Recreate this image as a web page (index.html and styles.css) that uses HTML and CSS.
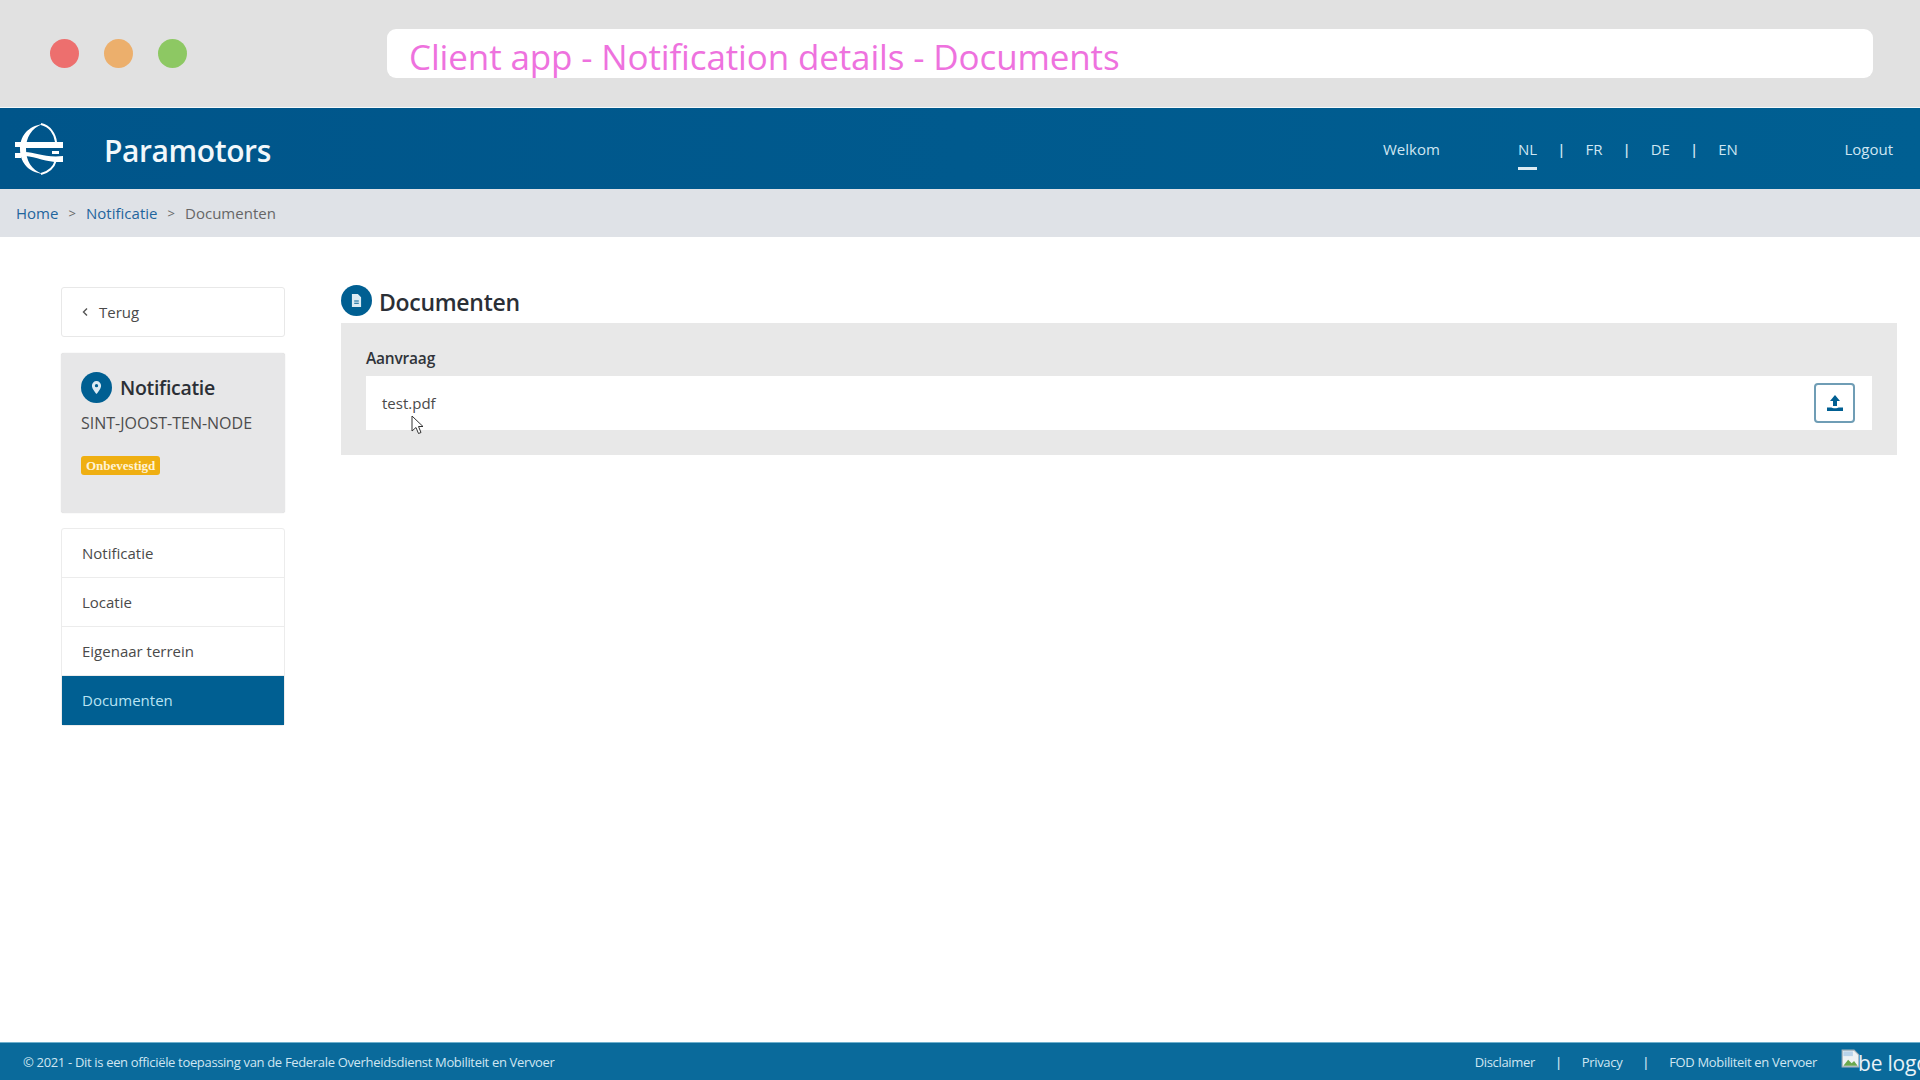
FILE: index.html
```html
<!DOCTYPE html>
<html lang="en">
<head>
  <meta charset="UTF-8" />
  <title>Client app - Notification details - Documents</title>
  <link rel="stylesheet" href="styles.css">
</head>
<body>
  <div class="window-bar">
    <div class="dots">
      <span class="dot red"></span>
      <span class="dot orange"></span>
      <span class="dot green"></span>
    </div>
    <div class="address">Client app - Notification details - Documents</div>
  </div>

  <header class="topbar">
    <svg class="logo" viewBox="0 0 50 52" fill="none">
      <path d="M29 1C13 3 6 14 6 26c0 12 7 23 23 25C17 47 12 37 12 26S17 5 29 1Z" fill="#fff"/>
      <path d="M27 1c9 2 14 10 15 18M42 37c-2 7-7 12-15 14" stroke="#fff" stroke-width="2"/>
      <rect x="11" y="19" width="38" height="6" fill="#fff"/>
      <path d="M11 29c10 0 20 6 38 4v6c-15 1-26-5-38-6Z" fill="#fff"/>
      <rect x="1" y="19" width="6" height="5" fill="#fff"/>
      <rect x="1" y="30" width="6" height="5" fill="#fff"/>
      <rect x="38" y="28" width="7" height="3" fill="#fff"/>
    </svg>
    <div class="brand">Paramotors</div>
    <nav class="topnav">
      <a class="welcome">Welkom</a>
      <a class="lang active">NL</a>
      <span class="sep">|</span>
      <a class="lang">FR</a>
      <span class="sep">|</span>
      <a class="lang">DE</a>
      <span class="sep">|</span>
      <a class="lang">EN</a>
      <a class="logout">Logout</a>
    </nav>
  </header>

  <div class="breadcrumb">
    <a>Home</a>
    <span class="gt">&gt;</span>
    <a>Notificatie</a>
    <span class="gt">&gt;</span>
    <span class="current">Documenten</span>
  </div>

  <div class="content">
    <aside class="sidebar">
      <a class="back-btn">
        <svg class="chevron" viewBox="0 0 8 10" fill="none"><path d="M6 1.5 2.5 5 6 8.500" stroke="#555" stroke-width="1.400"/></svg>
        Terug
      </a>
      <div class="summary">
        <div class="summary-title">
          <span class="round-icon">
            <svg viewBox="0 0 12 14" width="11" height="13"><path fill-rule="evenodd" d="M6 0a5 5 0 0 1 5 5c0 3.500-5 9-5 9S1 8.500 1 5a5 5 0 0 1 5-5Zm0 3.200a1.800 1.800 0 1 0 0 3.600 1.800 1.800 0 0 0 0-3.600Z" fill="#dcebf3"/></svg>
          </span>
          Notificatie
        </div>
        <div class="summary-place">SINT-JOOST-TEN-NODE</div>
        <span class="badge">Onbevestigd</span>
      </div>
      <ul class="side-menu">
        <li>Notificatie</li>
        <li>Locatie</li>
        <li>Eigenaar terrein</li>
        <li class="active">Documenten</li>
      </ul>
    </aside>

    <main class="main">
      <h1 class="page-title">
        <span class="round-icon">
          <svg viewBox="0 0 12 14" width="11" height="13"><path fill-rule="evenodd" d="M1 0h6.500L11 3.500V14H1Zm2.500 7v1h5V7Zm0 2.500v1h5v-1Z" fill="#dcebf3"/></svg>
        </span>
        <span class="page-title-text">Documenten</span>
      </h1>
      <section class="panel">
        <div class="panel-label">Aanvraag</div>
        <div class="file-row">
          <span>test.pdf</span>
          <button class="upload-btn">
            <svg viewBox="0 0 16 16" width="16" height="16"><path d="M8 0 13 6H10V11H6V6H3ZM0 12.500H4.500C5 13.500 11 13.500 11.500 12.500H16V16H0Z" fill="#005f92"/></svg>
          </button>
        </div>
      </section>
      <svg class="cursor" viewBox="0 0 13 20" width="13" height="20"><path d="M1 1v15l4-3.500 2.500 6 2.500-1-2.500-6H12Z" fill="#fff" stroke="#333" stroke-width="1"/></svg>
    </main>
  </div>

  <footer class="footer">
    <div class="copyright">© 2021 - Dit is een officiële toepassing van de Federale Overheidsdienst Mobiliteit en Vervoer</div>
    <div class="footer-links">
      <a>Disclaimer</a>
      <span class="sep">|</span>
      <a>Privacy</a>
      <span class="sep">|</span>
      <a>FOD Mobiliteit en Vervoer</a>
    </div>
    <div class="be-logo">
      <svg viewBox="0 0 16 16" width="19" height="19"><path d="M1 1h10l4 4v10H1Z" fill="#eef2f4" stroke="#aab4ba"/><path d="M2 14l4-5 3 3 2-2 3 4Z" fill="#6aa84f"/><path d="M2 2h8v4H2Z" fill="#b9d3ea"/></svg>
      <span>be logo</span>
    </div>
  </footer>
</body>
</html>
```

FILE: styles.css
```css
* {
  box-sizing: border-box;
}

html, body {
  height: 100%;
}

body {
  margin: 0;
  font-family: 'Open Sans', 'Noto Sans', sans-serif;
  font-size: 15px;
  color: #4a4a4a;
  background: #fff;
  display: flex;
  flex-direction: column;
  height: 1080px;
  overflow: hidden;
}

/* recording frame */
.window-bar {
  height: 108px;
  flex-shrink: 0;
  background: #e1e1e1;
  border-bottom: 1px solid #f4f8fa;
  display: flex;
  align-items: flex-start;
  padding: 29px 47px 0 50px;
}

.dots {
  display: flex;
  gap: 25px;
  margin: 10px 200px 0 0;
}

.dot {
  width: 29px;
  height: 29px;
  border-radius: 50%;
}

.red { background: #ed6f6e; }
.orange { background: #ecaf6c; }
.green { background: #8dc863; }

.address {
  flex: 1;
  height: 49px;
  background: #fff;
  border-radius: 9px;
  padding-left: 22px;
  font-size: 35px;
  line-height: 56px;
  color: #ee72de;
  letter-spacing: -0.14px;
}

/* app header */
.topbar {
  height: 81px;
  flex-shrink: 0;
  background: linear-gradient(to right, #00558a, #005f92);
  color: #cfe6f2;
  display: flex;
  align-items: center;
  padding-left: 14px;
}

.logo {
  width: 50px;
  height: 52px;
  flex-shrink: 0;
}

.brand {
  margin-left: 40px;
  padding-top: 4px;
  font-size: 30px;
  font-weight: 600;
  color: #f2f8fb;
  letter-spacing: -0.4px;
}

.topnav {
  margin-left: auto;
  display: flex;
  align-items: center;
  width: 537px;
  font-size: 15px;
}

.welcome {
  width: 135px;
}

.lang {
  position: relative;
}

.lang.active::after {
  content: "";
  position: absolute;
  left: 0;
  right: 0;
  bottom: -11px;
  height: 3px;
  background: #dcebf3;
}

.sep {
  margin: 0 20px;
  font-weight: 600;
}

.logout {
  margin-left: auto;
  margin-right: 27px;
}

.breadcrumb {
  height: 48px;
  flex-shrink: 0;
  background: #dfe2e7;
  display: flex;
  align-items: center;
  padding-left: 16px;
  font-size: 15px;
  letter-spacing: 0.02px;
  color: #666;
}

.breadcrumb a {
  color: #1f659d;
}

.gt {
  margin: 0 10px;
  font-size: 13px;
}

/* page body */
.content {
  flex: 1;
  display: flex;
  padding: 50px 23px 0 61px;
}

.sidebar {
  width: 224px;
  flex-shrink: 0;
}

.back-btn {
  height: 50px;
  background: #fff;
  border: 1px solid #e8e8e8;
  border-radius: 3px;
  display: flex;
  align-items: center;
  padding-left: 19px;
  gap: 10px;
}

.chevron {
  width: 8px;
  height: 10px;
}

.summary {
  margin-top: 16px;
  height: 160px;
  background: #e7e7e8;
  border-radius: 3px;
  padding: 19px 20px;
  box-shadow: 0 0 1px #ccc;
}

.summary-title {
  display: flex;
  align-items: center;
  gap: 8px;
  font-size: 19.500px;
  font-weight: 600;
  color: #2b2f36;
  letter-spacing: -0.3px;
}

.round-icon {
  width: 31px;
  height: 31px;
  border-radius: 50%;
  background: #005f92;
  display: flex;
  align-items: center;
  justify-content: center;
  flex-shrink: 0;
}

.summary-place {
  margin-top: 9px;
  font-size: 16px;
  color: #4d4d4d;
}

.badge {
  display: inline-block;
  margin-top: 22px;
  height: 19px;
  padding: 0 5px;
  background: #efaf12;
  border-radius: 3px;
  font-size: 13px;
  line-height: 19px;
  font-weight: 700;
  color: #fff3d6;
  font-family: 'Liberation Serif', serif;
}

.side-menu {
  list-style: none;
  margin: 15px 0 0;
  padding: 0;
  border: 1px solid #ececec;
  border-radius: 3px;
}

.side-menu li {
  height: 49px;
  line-height: 48px;
  padding-left: 20px;
  border-bottom: 1px solid #ececec;
}

.side-menu li:last-child {
  border-bottom: none;
}

.side-menu li.active {
  background: #005f92;
  color: #b9e3f3;
}

.main {
  flex: 1;
  margin-left: 56px;
  position: relative;
}

.page-title {
  margin: -2px 0 7px;
  height: 31px;
  display: flex;
  align-items: center;
  gap: 7px;
  font-size: 23px;
  font-weight: 600;
  color: #2b2f36;
  letter-spacing: -0.3px;
}

.page-title-text {
  padding-top: 3px;
}

.panel {
  height: 132px;
  background: #e8e8e8;
  padding: 24px 25px 25px;
}

.panel-label {
  height: 29px;
  font-size: 15.500px;
  font-weight: 600;
  color: #30343a;
  letter-spacing: -0.2px;
}

.file-row {
  height: 54px;
  background: #fff;
  display: flex;
  align-items: center;
  justify-content: space-between;
  padding: 0 17px 0 16px;
}

.upload-btn {
  width: 41px;
  height: 40px;
  background: #fff;
  border: 2px solid #6f9db5;
  border-radius: 4px;
  padding: 0;
  display: flex;
  align-items: center;
  justify-content: center;
}

.cursor {
  position: absolute;
  left: 70px;
  top: 128px;
}

.footer {
  height: 38px;
  flex-shrink: 0;
  background: #0a6a9b;
  border-top: 1px solid #6fb0cd;
  color: #cfe6f2;
  display: flex;
  align-items: center;
  padding: 1px 0 0 23px;
  font-size: 13px;
  letter-spacing: -0.33px;
  overflow: hidden;
}

.footer-links {
  margin-left: auto;
  display: flex;
  align-items: center;
}

.be-logo {
  width: 79px;
  margin-left: 24px;
  flex-shrink: 0;
  display: flex;
  align-items: flex-start;
  white-space: nowrap;
  font-size: 21px;
  letter-spacing: -0.2px;
  color: #e8f2f7;
  height: 37px;
  overflow: hidden;
}

.be-logo svg {
  flex-shrink: 0;
  margin: 5px -2px 0 0;
}

.be-logo span {
  margin-top: 5px;
}
```
